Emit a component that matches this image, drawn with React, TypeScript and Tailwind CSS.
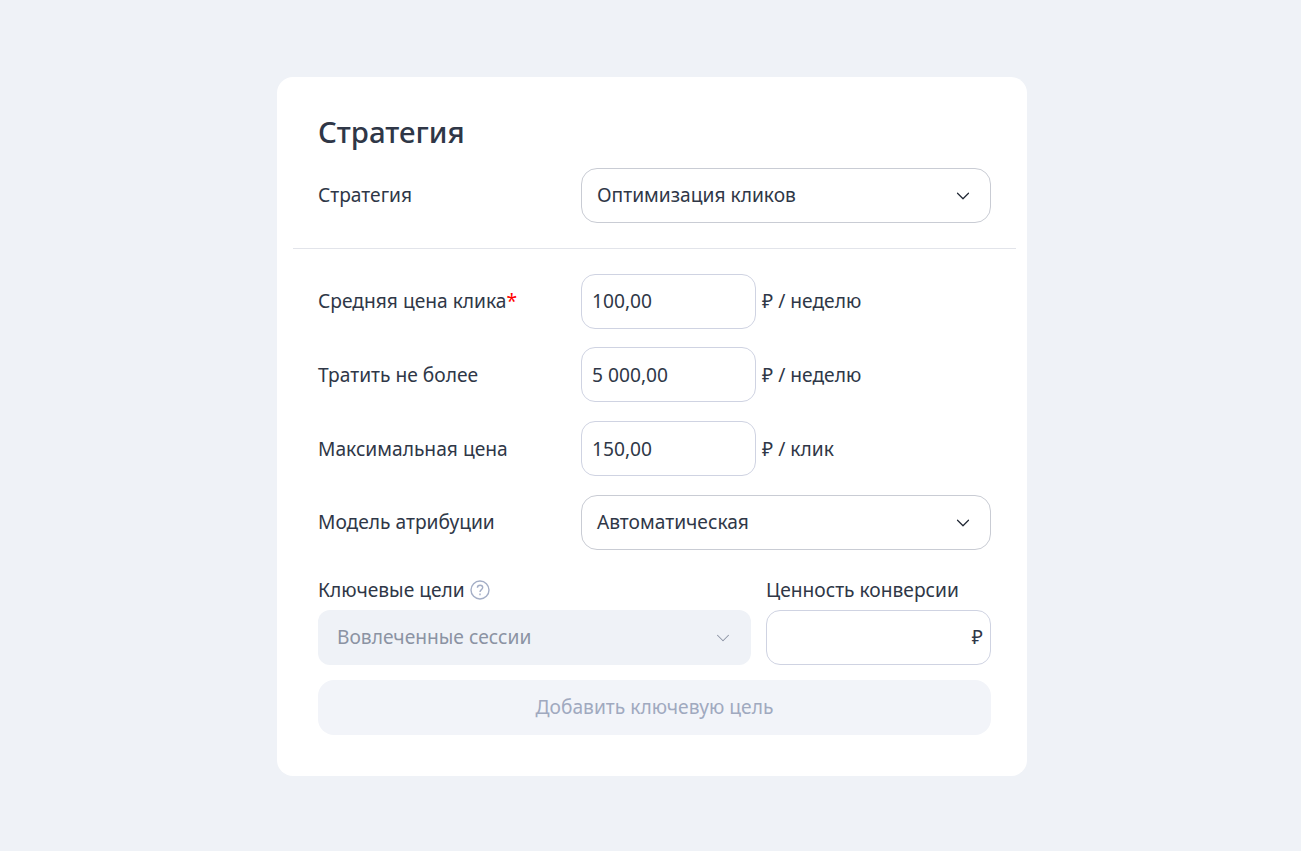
import { ChevronDown } from "lucide-react"

const textCls = "text-[19.2px] leading-6 text-[#2f3747]"

function Select({ value }: { value: string }) {
  return (
    <div className="flex h-[55px] w-[410px] items-center justify-between rounded-[16px] border border-[#c9ccd4] bg-white pl-[15px] pr-[16px]">
      <span className={`mb-[2px] ${textCls}`}>{value}</span>
      <ChevronDown size={22} strokeWidth={1.3} className="text-[#1f2633]" />
    </div>
  )
}

function PriceRow({ label, value, unit, required, raised, className }: { label: string; value: string; unit: string; required?: boolean; raised?: boolean; className?: string }) {
  // first row's text sits 1px higher in its field than the others
  const shift = raised ? "mb-[2px]" : ""
  return (
    <div className={`flex items-center ${className ?? ""}`}>
      <div className={`w-[263px] shrink-0 ${shift} ${textCls}`}>
        {label}
        {required && <span className="text-[#f00]">*</span>}
      </div>
      <div className="flex h-[55px] w-[175px] items-center rounded-[14px] border border-[#cfd3e2] bg-white pl-[10px]">
        <span className={`${shift} ${textCls}`}>{value}</span>
      </div>
      <span className={`ml-[6px] ${shift} ${textCls}`}>{unit}</span>
    </div>
  )
}

export default function App() {
  return (
    <div className="flex min-h-[851px] items-start justify-center bg-[#eff2f7] pl-[3px] pt-[77px] font-['Noto_Sans',sans-serif]">
      <div className="h-[699px] w-[750px] rounded-[16px] bg-white pl-[41px] pr-[36px] pt-[36px]">
        <h1 className="text-[29.4px] font-medium leading-[38px] text-[#2f3747]">Стратегия</h1>

        <div className="mt-[17px] flex items-center">
          <div className={`mb-[2px] w-[263px] shrink-0 ${textCls}`}>Стратегия</div>
          <Select value="Оптимизация кликов" />
        </div>

        <div className="-ml-[25px] -mr-[25px] mt-[25px] h-px bg-[#e2e4ea]" />

        <div className="mt-[25px] flex flex-col gap-[19px]">
          <PriceRow label="Средняя цена клика" value="100,00" unit="₽ / неделю" required raised />
          <PriceRow label="Тратить не более" value="5 000,00" unit="₽ / неделю" className="-mt-px" />
          <PriceRow label="Максимальная цена" value="150,00" unit="₽ / клик" />
          <div className="flex items-center">
            <div className={`mb-[2px] w-[263px] shrink-0 ${textCls}`}>Модель атрибуции</div>
            <Select value="Автоматическая" />
          </div>
        </div>

        <div className="mt-[25px] flex gap-[15px]">
          <div className="w-[433px]">
            <div className="flex h-[35px] items-start gap-[5px] text-[19.2px] leading-[30px] text-[#2f3747]">
              Ключевые цели
              <svg className="mt-[5px]" width="20" height="20" viewBox="0 0 20 20" fill="none" stroke="#a4aec6" strokeWidth="1.4">
                <circle cx="10" cy="10" r="9" />
                <path d="M7.4 7.8c0-1.5 1.2-2.5 2.7-2.5s2.6 1 2.6 2.3c0 2-2.7 2.1-2.7 4.3" />
                <path d="M10 13.6v1.6" />
              </svg>
            </div>
            <div className="flex h-[55px] items-center justify-between rounded-[12px] bg-[#eff2f7] pl-[19px] pr-[17px]">
              <span className="mb-[2px] text-[19.2px] leading-6 text-[#8b93a3]">Вовлеченные сессии</span>
              <ChevronDown size={22} strokeWidth={1.1} className="text-[#8b93a3]" />
            </div>
          </div>
          <div className="w-[225px]">
            <div className="flex h-[35px] items-start text-[19.2px] leading-[30px] text-[#2f3747]">Ценность конверсии</div>
            <div className="flex h-[55px] items-center justify-end rounded-[14px] border border-[#cfd3e2] bg-white pr-[7px]">
              <span className={`mb-[2px] ${textCls}`}>₽</span>
            </div>
          </div>
        </div>

        <button
          type="button"
          className="mt-[15px] flex h-[55px] w-full items-center justify-center rounded-[16px] bg-[#f2f4f9] pb-[2px] text-[19.2px] leading-6 text-[#a0a9bf]"
        >
          Добавить ключевую цель
        </button>
      </div>
    </div>
  )
}
